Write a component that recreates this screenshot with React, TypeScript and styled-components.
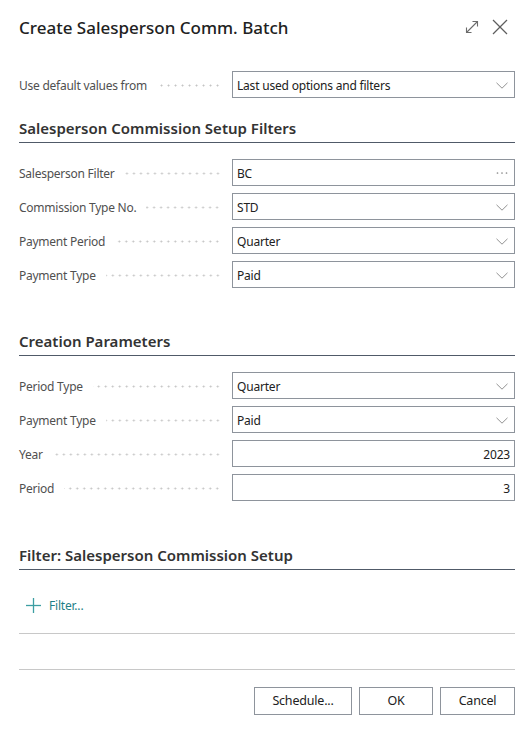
import React from "react";
import styled, { createGlobalStyle } from "styled-components";

const Global = createGlobalStyle`
  html, body { margin: 0; padding: 0; background: #ffffff; }
  body { font-family: "Segoe UI", "Noto Sans", "Open Sans", sans-serif; }
  * { box-sizing: border-box; }
`;

const Dialog = styled.div`
  width: 532px;
  height: 736px;
  padding: 0 17px 0 19px;
  background: #ffffff;
  display: flex;
  flex-direction: column;
`;

const Header = styled.header`
  height: 54px;
  display: flex;
  align-items: center;
  justify-content: space-between;
`;

const Title = styled.h1`
  margin: 0;
  font-size: 17px;
  font-weight: 500;
  color: #212121;
  letter-spacing: 0;
`;

const HeaderActions = styled.div`
  display: flex;
  align-items: center;
  gap: 12px;
  margin-right: 7px;
  color: #6b6b6b;
`;

const IconButton = styled.span`
  display: inline-flex;
  width: 16px;
  height: 16px;
  align-items: center;
  justify-content: center;
`;

const Fields = styled.div<{ $top: number }>`
  display: grid;
  row-gap: 7px;
  padding-top: ${(p) => p.$top}px;
`;

const Row = styled.div`
  display: grid;
  grid-template-columns: 203px 1fr;
  column-gap: 10px;
  height: 27px;
  align-items: center;
`;

const LabelCell = styled.div`
  display: flex;
  align-items: center;
  gap: 10px;
  min-width: 0;
`;

const Label = styled.span`
  font-size: 12px;
  letter-spacing: -0.25px;
  color: #505050;
  white-space: nowrap;
  padding-top: 2px;
`;

const Leader = styled.span`
  flex: 1;
  height: 3px;
  margin-right: 1px;
  margin-top: 1px;
  background-image: radial-gradient(circle, #c2c2c2 0.9px, transparent 1.1px);
  background-size: 7px 3px;
  background-position: right center;
  background-repeat: repeat-x;
`;

const Box = styled.div<{ $align?: "left" | "right" }>`
  height: 27px;
  border: 1px solid #8e949c;
  display: flex;
  align-items: center;
  padding: 2px 4px 0 4px;
  font-size: 12px;
  letter-spacing: -0.2px;
  color: #212121;
  justify-content: ${(p) => (p.$align === "right" ? "flex-end" : "space-between")};
`;

const BoxIcon = styled.span`
  display: inline-flex;
  align-items: center;
  margin-right: 2px;
  margin-bottom: 1px;
  color: #8a8a8a;
`;

const Section = styled.section<{ $top: number }>`
  margin-top: ${(p) => p.$top}px;
`;

const SectionTitle = styled.h2`
  margin: 0;
  font-size: 15px;
  font-weight: 600;
  line-height: 20px;
  color: #333333;
  padding-bottom: 4px;
  border-bottom: 1px solid #505a68;
`;

const FilterArea = styled.div`
  padding: 25px 0 15px 7px;
  border-bottom: 1px solid #c8c8c8;
`;

const FilterLink = styled.span`
  display: inline-flex;
  align-items: center;
  gap: 8px;
  height: 20px;
  font-size: 12px;
  letter-spacing: -0.2px;
  color: #1d7f87;
`;

const Spacer = styled.div`
  height: 35px;
`;

const Footer = styled.footer`
  border-top: 1px solid #c8c8c8;
  padding-top: 17px;
  display: flex;
  justify-content: flex-end;
  gap: 7px;
`;

const Button = styled.button<{ $w: number }>`
  width: ${(p) => p.$w}px;
  height: 28px;
  border: 1px solid #8e949c;
  background: #ffffff;
  font-family: inherit;
  font-size: 12.5px;
  letter-spacing: -0.2px;
  color: #212121;
  padding: 0;
`;

const Chevron = () => (
  <svg width="12" height="7" viewBox="0 0 12 7" fill="none">
    <path d="M0.5 0.8 L6 6.2 L11.5 0.8" stroke="#929292" strokeWidth="1" />
  </svg>
);

const Ellipsis = () => (
  <svg width="12" height="4" viewBox="0 0 12 4">
    <circle cx="1.5" cy="2" r="0.85" fill="#8a8a8a" />
    <circle cx="6" cy="2" r="0.85" fill="#8a8a8a" />
    <circle cx="10.5" cy="2" r="0.85" fill="#8a8a8a" />
  </svg>
);

type Field = { label: string; value: string; kind: "select" | "lookup" | "number" };

const Input = ({ f }: { f: Field }) => (
  <Box $align={f.kind === "number" ? "right" : "left"}>
    <span>{f.value}</span>
    {f.kind === "select" && (
      <BoxIcon>
        <Chevron />
      </BoxIcon>
    )}
    {f.kind === "lookup" && (
      <BoxIcon>
        <Ellipsis />
      </BoxIcon>
    )}
  </Box>
);

const FieldRow = ({ f }: { f: Field }) => (
  <Row>
    <LabelCell>
      <Label>{f.label}</Label>
      <Leader />
    </LabelCell>
    <Input f={f} />
  </Row>
);

const setupFields: Field[] = [
  { label: "Salesperson Filter", value: "BC", kind: "lookup" },
  { label: "Commission Type No.", value: "STD", kind: "select" },
  { label: "Payment Period", value: "Quarter", kind: "select" },
  { label: "Payment Type", value: "Paid", kind: "select" },
];

const creationFields: Field[] = [
  { label: "Period Type", value: "Quarter", kind: "select" },
  { label: "Payment Type", value: "Paid", kind: "select" },
  { label: "Year", value: "2023", kind: "number" },
  { label: "Period", value: "3", kind: "number" },
];

export default function App() {
  return (
    <>
      <Global />
      <Dialog>
        <Header>
          <Title>Create Salesperson Comm. Batch</Title>
          <HeaderActions>
            <IconButton>
              <svg width="14" height="14" viewBox="0 0 14 14" fill="none" stroke="#6b6b6b" strokeWidth="1.1">
                <path d="M1.5 12.5 L12.5 1.5" />
                <path d="M7.5 1.5 L12.5 1.5 L12.5 6.5" />
                <path d="M1.5 7.5 L1.5 12.5 L6.5 12.5" />
              </svg>
            </IconButton>
            <IconButton>
              <svg width="16" height="16" viewBox="0 0 16 16" fill="none" stroke="#5e5e5e" strokeWidth="1.3">
                <path d="M1 1 L15 15" />
                <path d="M15 1 L1 15" />
              </svg>
            </IconButton>
          </HeaderActions>
        </Header>

        <Fields $top={17}>
          <FieldRow f={{ label: "Use default values from", value: "Last used options and filters", kind: "select" }} />
        </Fields>

        <Section $top={20}>
          <SectionTitle>Salesperson Commission Setup Filters</SectionTitle>
          <Fields $top={16}>
            {setupFields.map((f) => (
              <FieldRow key={f.label} f={f} />
            ))}
          </Fields>
        </Section>

        <Section $top={43}>
          <SectionTitle>Creation Parameters</SectionTitle>
          <Fields $top={16}>
            {creationFields.map((f) => (
              <FieldRow key={f.label} f={f} />
            ))}
          </Fields>
        </Section>

        <Section $top={44}>
          <SectionTitle>Filter: Salesperson Commission Setup</SectionTitle>
          <FilterArea>
            <FilterLink>
              <svg width="15" height="15" viewBox="0 0 15 15" fill="none" stroke="#3d9ea3" strokeWidth="1.3">
                <path d="M7.5 0 L7.5 15" />
                <path d="M0 7.5 L15 7.5" />
              </svg>
              <span>Filter...</span>
            </FilterLink>
          </FilterArea>
        </Section>

        <Spacer />

        <Footer>
          <Button $w={98}>Schedule...</Button>
          <Button $w={74}>OK</Button>
          <Button $w={75}>Cancel</Button>
        </Footer>
      </Dialog>
    </>
  );
}
